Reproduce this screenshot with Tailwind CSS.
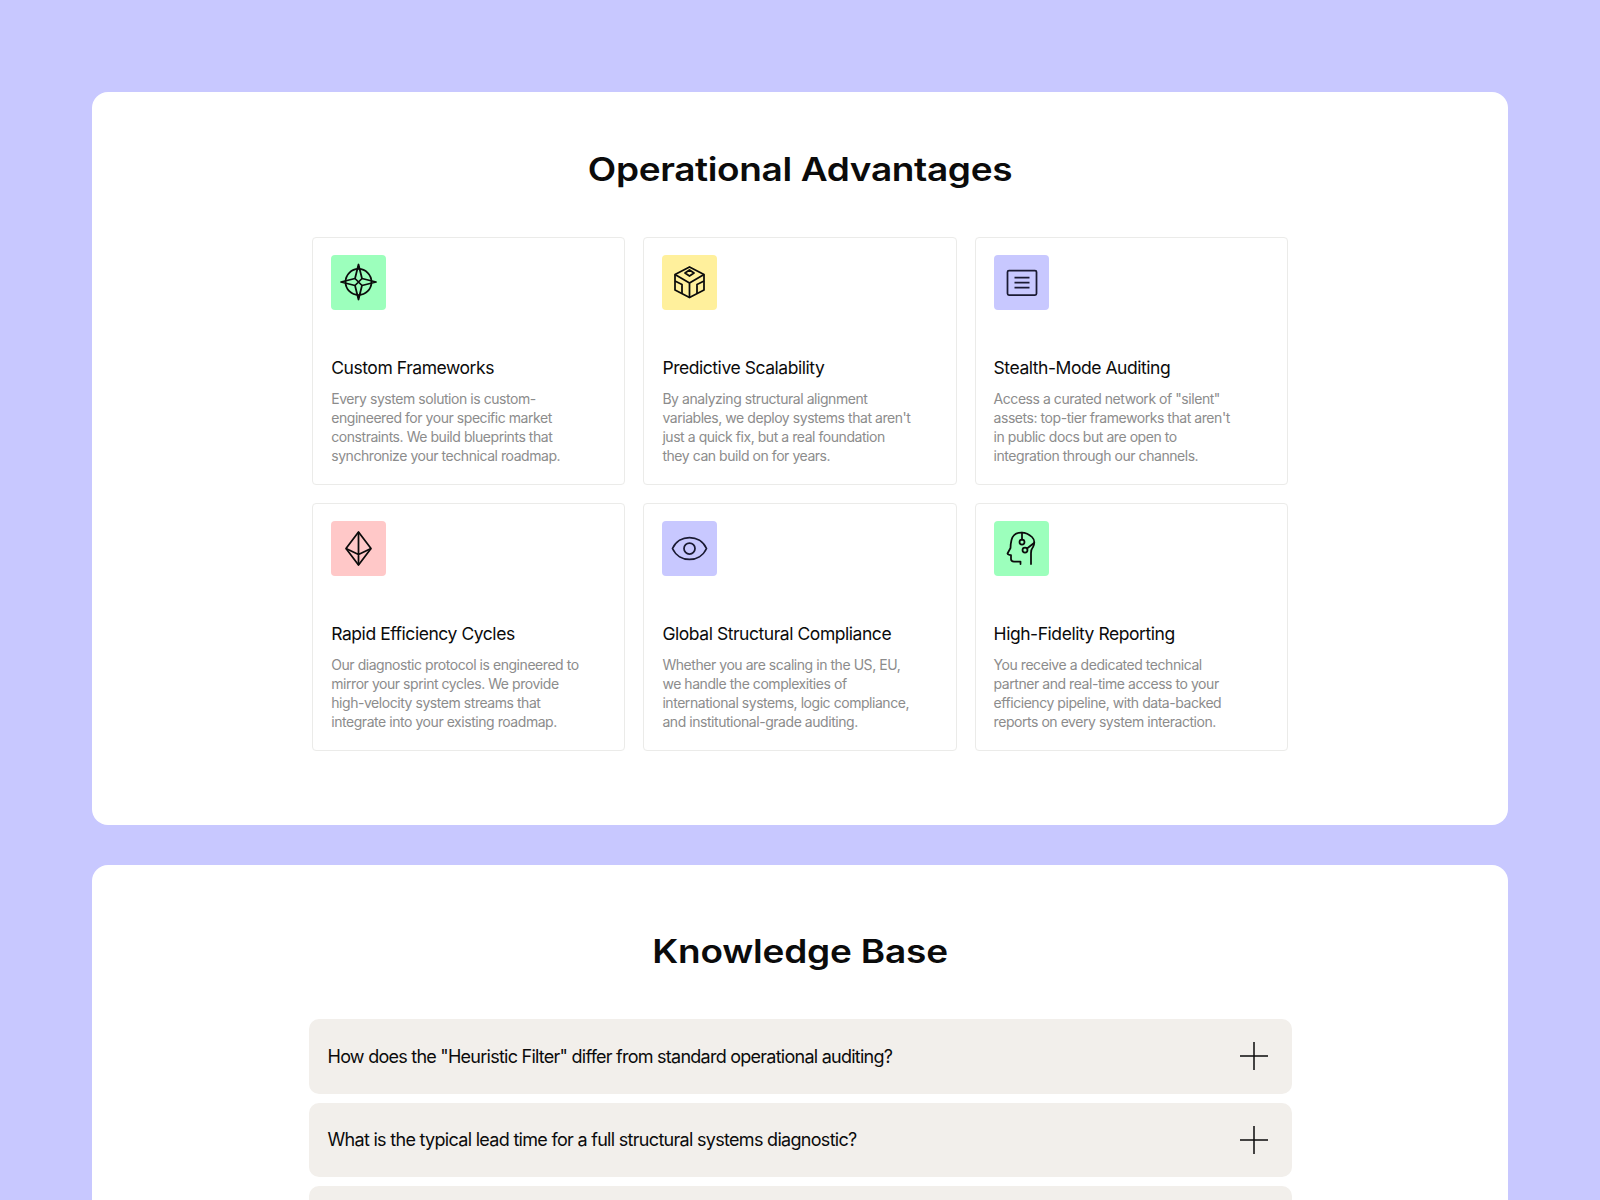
<!DOCTYPE html>
<html lang="en">
<head>
<meta charset="UTF-8">
<title>Operational Advantages</title>
<script src="https://cdn.jsdelivr.net/npm/@tailwindcss/browser@4"></script>
</head>
<body class="h-[1200px] overflow-hidden bg-[#c8c8ff] px-[92px] pt-[92px] font-['Inter',sans-serif] text-[#0b0b0b]">

  <!-- Operational Advantages -->
  <section class="h-[733px] rounded-2xl bg-white pt-[52px]">
    <h2 class="scale-y-[0.87] text-center text-[37px] leading-[52px] font-semibold tracking-[-0.35px]">Operational Advantages</h2>
    <div class="mx-auto mt-[40.5px] grid w-[975.5px] grid-cols-3 gap-[18px]">

      <div class="h-[248px] rounded-[4px] border border-[#ebebe9] px-[18px] pt-[17.5px]">
        <div class="h-[55px] w-[55px] rounded-[4px] bg-[#9cffbc]">
          <svg width="55" height="55" viewBox="0 0 55 55" fill="none" stroke="#0b0b0b" stroke-width="1.75" stroke-linejoin="round">
            <circle cx="27.5" cy="27" r="13"/>
            <path d="M27.5 9.5 L31 23.5 L45 27 L31 30.5 L27.5 44.5 L24 30.5 L10 27 L24 23.5Z"/>
            <path d="M24 23.5 L31 30.5 M31 23.5 L24 30.5"/>
          </svg>
        </div>
        <h3 class="mt-[46px] text-[17.5px] leading-[24px] tracking-[-0.45px]">Custom Frameworks</h3>
        <p class="mt-[8.5px] text-[14px] leading-[19.3px] tracking-[-0.45px] text-[#8c8c8c]">Every system solution is custom-<br>engineered for your specific market<br>constraints. We build blueprints that<br>synchronize your technical roadmap.</p>
      </div>

      <div class="h-[248px] rounded-[4px] border border-[#ebebe9] px-[18px] pt-[17.5px]">
        <div class="h-[55px] w-[55px] rounded-[4px] bg-[#fff09c]">
          <svg width="55" height="55" viewBox="0 0 55 55" fill="none" stroke="#0b0b0b" stroke-width="1.75" stroke-linejoin="round">
            <path d="M27.5 12 L42 19.5 V35 L27.5 42.5 L13 35 V19.5Z"/>
            <path d="M27.5 15 L32 18 L27.5 21 L23 18Z"/>
            <path d="M13 19.5 L27.5 28 L42 19.5 M27.5 28 V42.5"/>
            <path d="M13 26 L20 29.5 V38.5 M42 26 L35 29.5 V38.5"/>
          </svg>
        </div>
        <h3 class="mt-[46px] text-[17.5px] leading-[24px] tracking-[-0.45px]">Predictive Scalability</h3>
        <p class="mt-[8.5px] text-[14px] leading-[19.3px] tracking-[-0.45px] text-[#8c8c8c]">By analyzing structural alignment<br>variables, we deploy systems that aren't<br>just a quick fix, but a real foundation<br>they can build on for years.</p>
      </div>

      <div class="h-[248px] rounded-[4px] border border-[#ebebe9] px-[18px] pt-[17.5px]">
        <div class="h-[55px] w-[55px] rounded-[4px] bg-[#c8c8ff]">
          <svg width="55" height="55" viewBox="0 0 55 55" fill="none" stroke="#1a1a33" stroke-width="1.75">
            <rect x="13.5" y="15.5" width="29" height="24.5" rx="1.5"/>
            <path d="M20.5 22.5 H35.5 M20.5 27.5 H35.5 M20.5 32.5 H35.5"/>
          </svg>
        </div>
        <h3 class="mt-[46px] text-[17.5px] leading-[24px] tracking-[-0.45px]">Stealth-Mode Auditing</h3>
        <p class="mt-[8.5px] text-[14px] leading-[19.3px] tracking-[-0.45px] text-[#8c8c8c]">Access a curated network of "silent"<br>assets: top-tier frameworks that aren't<br>in public docs but are open to<br>integration through our channels.</p>
      </div>

      <div class="h-[248px] rounded-[4px] border border-[#ebebe9] px-[18px] pt-[17.5px]">
        <div class="h-[55px] w-[55px] rounded-[4px] bg-[#ffc8c8]">
          <svg width="55" height="55" viewBox="0 0 55 55" fill="none" stroke="#0b0b0b" stroke-width="1.75" stroke-linejoin="round">
            <path d="M27.5 11 L40 27.5 L27.5 44 L15 27.5Z"/>
            <path d="M27.5 11 V44 M15 27.5 L27.5 33.5 L40 27.5"/>
          </svg>
        </div>
        <h3 class="mt-[46px] text-[17.5px] leading-[24px] tracking-[-0.45px]">Rapid Efficiency Cycles</h3>
        <p class="mt-[8.5px] text-[14px] leading-[19.3px] tracking-[-0.45px] text-[#8c8c8c]">Our diagnostic protocol is engineered to<br>mirror your sprint cycles. We provide<br>high-velocity system streams that<br>integrate into your existing roadmap.</p>
      </div>

      <div class="h-[248px] rounded-[4px] border border-[#ebebe9] px-[18px] pt-[17.5px]">
        <div class="h-[55px] w-[55px] rounded-[4px] bg-[#c8c8ff]">
          <svg width="55" height="55" viewBox="0 0 55 55" fill="none" stroke="#1a1a33" stroke-width="1.75">
            <path d="M10.5 27.5 C17 13 38 13 44.5 27.5 C38 42 17 42 10.5 27.5Z"/>
            <circle cx="27.5" cy="27.5" r="5.5"/>
          </svg>
        </div>
        <h3 class="mt-[46px] text-[17.5px] leading-[24px] tracking-[-0.45px]">Global Structural Compliance</h3>
        <p class="mt-[8.5px] text-[14px] leading-[19.3px] tracking-[-0.45px] text-[#8c8c8c]">Whether you are scaling in the US, EU,<br>we handle the complexities of<br>international systems, logic compliance,<br>and institutional-grade auditing.</p>
      </div>

      <div class="h-[248px] rounded-[4px] border border-[#ebebe9] px-[18px] pt-[17.5px]">
        <div class="h-[55px] w-[55px] rounded-[4px] bg-[#9cffbc]">
          <svg width="55" height="55" viewBox="0 0 55 55" fill="none" stroke="#0b0b0b" stroke-width="1.75" stroke-linecap="round" stroke-linejoin="round">
            <path d="M37 43 V32 Q37 28.5 39 26 Q42 20 38 16 Q33.5 11.5 27.5 11.5 Q19.5 11.5 17.5 19 Q16.5 23 16.5 27 L13.5 32.5 Q14 34 17 34 V38 Q17 40.5 20 40.5 H26.5 V43"/>
            <circle cx="28" cy="21" r="2.5"/>
            <path d="M28 11.5 V18.5"/>
            <circle cx="31" cy="29" r="2.5"/>
            <path d="M33 27.5 L40 22"/>
          </svg>
        </div>
        <h3 class="mt-[46px] text-[17.5px] leading-[24px] tracking-[-0.45px]">High-Fidelity Reporting</h3>
        <p class="mt-[8.5px] text-[14px] leading-[19.3px] tracking-[-0.45px] text-[#8c8c8c]">You receive a dedicated technical<br>partner and real-time access to your<br>efficiency pipeline, with data-backed<br>reports on every system interaction.</p>
      </div>

    </div>
  </section>

  <!-- Knowledge Base -->
  <section class="mt-10 rounded-t-2xl bg-white pt-[61px] pb-10">
    <h2 class="scale-y-[0.87] text-center text-[37px] leading-[52px] font-semibold tracking-[-0.2px]">Knowledge Base</h2>
    <div class="mx-auto mt-[41px] flex w-[983px] flex-col gap-[9px]">
      <div class="flex h-[74.5px] items-center justify-between rounded-[10px] bg-[#f2efeb] pr-6 pl-[19px]">
        <span class="text-[18px] tracking-[-0.75px]">How does the "Heuristic Filter" differ from standard operational auditing?</span>
        <svg width="28" height="28" viewBox="0 0 28 28" stroke="#0b0b0b" stroke-width="1.5"><path d="M0 14 H28 M14 0 V28"/></svg>
      </div>
      <div class="flex h-[74.5px] items-center justify-between rounded-[10px] bg-[#f2efeb] pr-6 pl-[19px]">
        <span class="text-[18px] tracking-[-0.7px]">What is the typical lead time for a full structural systems diagnostic?</span>
        <svg width="28" height="28" viewBox="0 0 28 28" stroke="#0b0b0b" stroke-width="1.5"><path d="M0 14 H28 M14 0 V28"/></svg>
      </div>
      <div class="h-[74.5px] rounded-[10px] bg-[#f2efeb]"></div>
    </div>
  </section>

</body>
</html>
